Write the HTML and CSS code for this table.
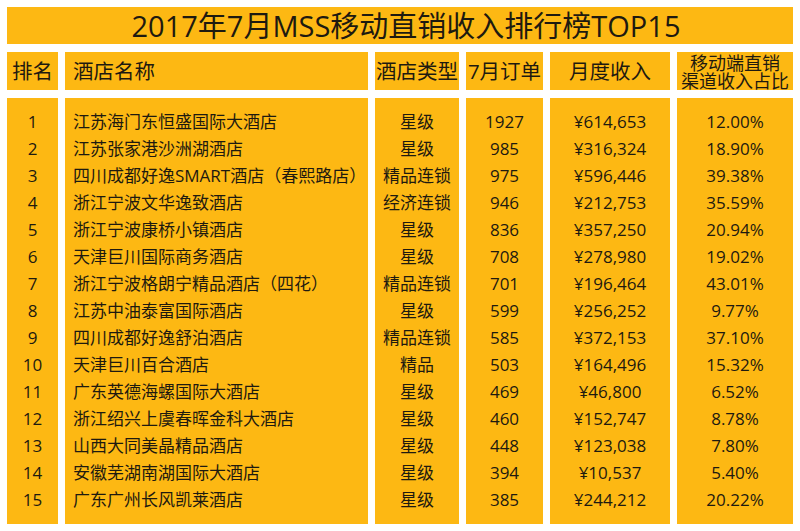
FILE: index.html
```html
<!DOCTYPE html>
<html lang="zh-CN">
<head>
<meta charset="utf-8">
<title>2017年7月MSS移动直销收入排行榜TOP15</title>
<link rel="stylesheet" href="styles.css">
</head>
<body>
<div class="sheet">
  <div class="title">2017年7月MSS移动直销收入排行榜TOP15</div>
  <div class="grid head">
    <div class="hcell c">排名</div>
    <div class="hcell l">酒店名称</div>
    <div class="hcell c">酒店类型</div>
    <div class="hcell c">7月订单</div>
    <div class="hcell c">月度收入</div>
    <div class="hcell c two"><span class="ln">移动端直销<br>渠道收入占比</span></div>
  </div>
  <div class="grid body">
    <div class="col c">
      <div class="r">1</div><div class="r">2</div><div class="r">3</div><div class="r">4</div><div class="r">5</div>
      <div class="r">6</div><div class="r">7</div><div class="r">8</div><div class="r">9</div><div class="r">10</div>
      <div class="r">11</div><div class="r">12</div><div class="r">13</div><div class="r">14</div><div class="r">15</div>
    </div>
    <div class="col l">
      <div class="r">江苏海门东恒盛国际大酒店</div>
      <div class="r">江苏张家港沙洲湖酒店</div>
      <div class="r">四川成都好逸SMART酒店（春熙路店）</div>
      <div class="r">浙江宁波文华逸致酒店</div>
      <div class="r">浙江宁波康桥小镇酒店</div>
      <div class="r">天津巨川国际商务酒店</div>
      <div class="r">浙江宁波格朗宁精品酒店（四花）</div>
      <div class="r">江苏中油泰富国际酒店</div>
      <div class="r">四川成都好逸舒泊酒店</div>
      <div class="r">天津巨川百合酒店</div>
      <div class="r">广东英德海螺国际大酒店</div>
      <div class="r">浙江绍兴上虞春晖金科大酒店</div>
      <div class="r">山西大同美晶精品酒店</div>
      <div class="r">安徽芜湖南湖国际大酒店</div>
      <div class="r">广东广州长风凯莱酒店</div>
    </div>
    <div class="col c">
      <div class="r">星级</div><div class="r">星级</div><div class="r">精品连锁</div><div class="r">经济连锁</div><div class="r">星级</div>
      <div class="r">星级</div><div class="r">精品连锁</div><div class="r">星级</div><div class="r">精品连锁</div><div class="r">精品</div>
      <div class="r">星级</div><div class="r">星级</div><div class="r">星级</div><div class="r">星级</div><div class="r">星级</div>
    </div>
    <div class="col c">
      <div class="r">1927</div><div class="r">985</div><div class="r">975</div><div class="r">946</div><div class="r">836</div>
      <div class="r">708</div><div class="r">701</div><div class="r">599</div><div class="r">585</div><div class="r">503</div>
      <div class="r">469</div><div class="r">460</div><div class="r">448</div><div class="r">394</div><div class="r">385</div>
    </div>
    <div class="col c">
      <div class="r">¥614,653</div><div class="r">¥316,324</div><div class="r">¥596,446</div><div class="r">¥212,753</div><div class="r">¥357,250</div>
      <div class="r">¥278,980</div><div class="r">¥196,464</div><div class="r">¥256,252</div><div class="r">¥372,153</div><div class="r">¥164,496</div>
      <div class="r">¥46,800</div><div class="r">¥152,747</div><div class="r">¥123,038</div><div class="r">¥10,537</div><div class="r">¥244,212</div>
    </div>
    <div class="col c">
      <div class="r">12.00%</div><div class="r">18.90%</div><div class="r">39.38%</div><div class="r">35.59%</div><div class="r">20.94%</div>
      <div class="r">19.02%</div><div class="r">43.01%</div><div class="r">9.77%</div><div class="r">37.10%</div><div class="r">15.32%</div>
      <div class="r">6.52%</div><div class="r">8.78%</div><div class="r">7.80%</div><div class="r">5.40%</div><div class="r">20.22%</div>
    </div>
  </div>
</div>
</body>
</html>
```

FILE: styles.css
```css
*, *::before, *::after {
  box-sizing: border-box;
}
html, body {
  margin: 0;
  padding: 0;
  background: #ffffff;
}
body {
  font-family: "Open Sans", "Noto Sans CJK SC", sans-serif;
  color: #1e1a10;
}
.sheet {
  width: 800px;
  padding: 7px;
  display: flex;
  flex-direction: column;
  gap: 8px;
}
.title {
  background: #fdb813;
  height: 37px;
  display: flex;
  align-items: center;
  justify-content: center;
  font-size: 29px;
  line-height: 1;
  padding-left: 12px;
}
.grid {
  display: grid;
  grid-template-columns: 51px 303px 84px 77px 120px 116px;
  column-gap: 7px;
}
.hcell {
  background: #fdb813;
  height: 38px;
  display: flex;
  align-items: center;
  font-size: 20.5px;
  line-height: 1;
  white-space: nowrap;
}
.hcell.c { justify-content: center; }
.hcell.l { padding-left: 8px; }
.hcell.two {
  font-size: 18px;
  padding-top: 1px;
}
.hcell.two .ln {
  display: block;
  text-align: center;
  line-height: 18px;
}
.col {
  background: #fdb813;
  padding: 10px 0 11px;
  font-size: 17px;
}
.col .r {
  height: 27px;
  line-height: 27px;
  white-space: nowrap;
}
.col.c .r { text-align: center; }
.col.l .r { padding-left: 8px; }
```
